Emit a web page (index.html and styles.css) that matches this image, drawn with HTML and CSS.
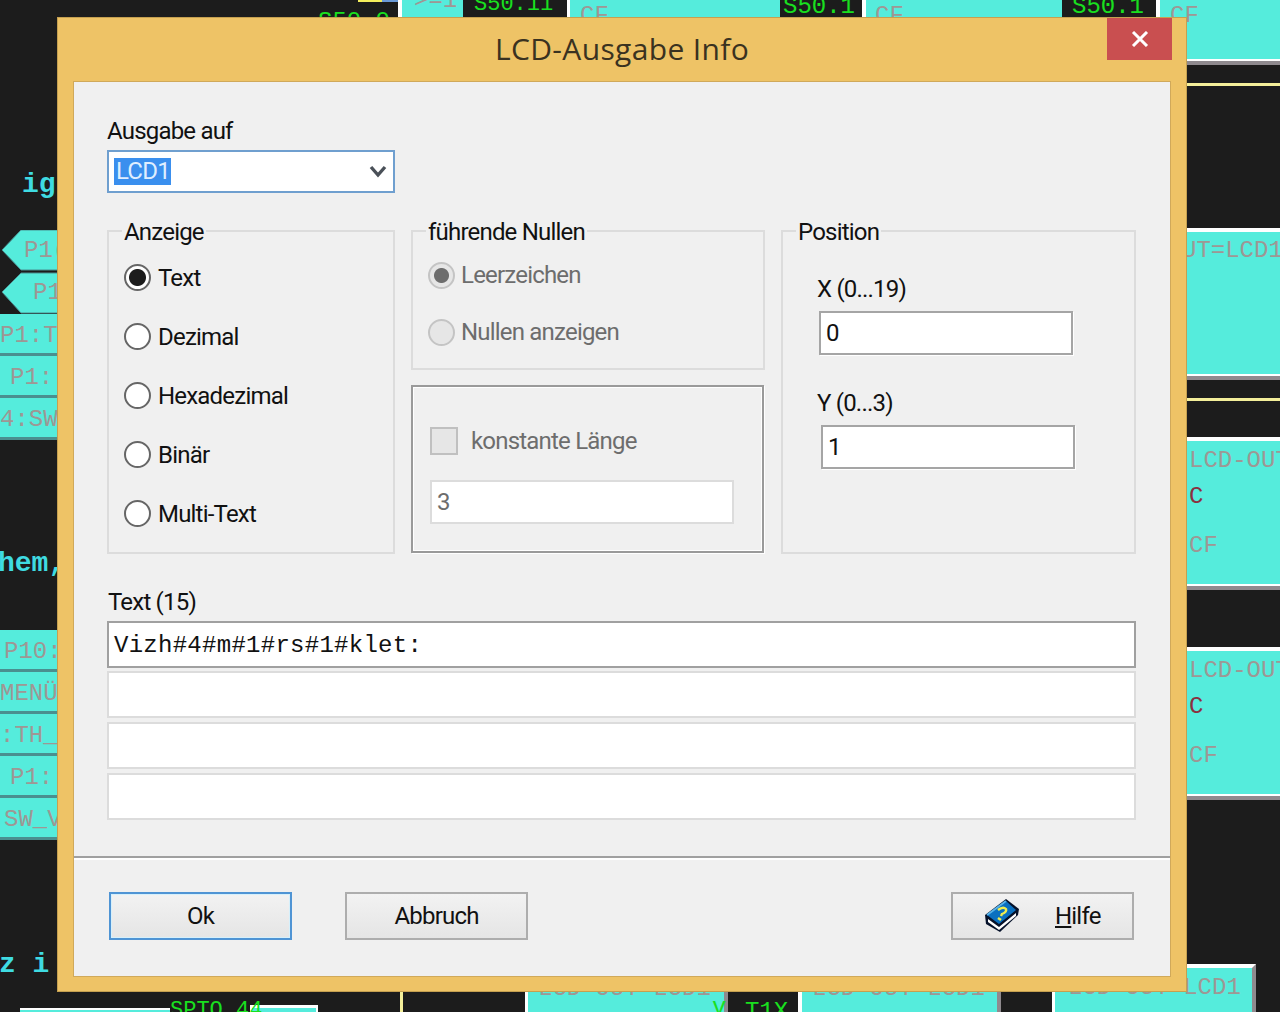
FILE: index.html
```html
<!DOCTYPE html>
<html lang="de">
<head>
<meta charset="utf-8">
<title>LCD-Ausgabe Info</title>
<link rel="stylesheet" href="styles.css">
</head>
<body>
<div class="desk">
  <div class="bk bar-yellow-top"></div>
  <div class="gr t-s0">S50.0</div>
  <div class="bk cy top1"><span class="gt tx-ge">&gt;=1</span></div>
  <div class="gr t-s1">S50.11</div>
  <div class="bk cy top2"><span class="gt tx-cf">CF</span></div>
  <div class="gr t-s2">S50.1</div>
  <div class="bk cy top3"><span class="gt tx-cf2">CF</span></div>
  <div class="gr t-s3">S50.1</div>
  <div class="bk cy top4"><span class="gt tx-cf3">CF</span></div>
  <div class="bk yline y1"></div>
  <div class="bk cy r1"><span class="gt tx-r1">UT=LCD1</span></div>
  <div class="bk yline y2"></div>
  <div class="bk cy r2"><span class="gt tx-l1">LCD-OUT</span><span class="rd tx-c">C</span><span class="gt tx-cf4">CF</span></div>
  <div class="bk cy r3"><span class="gt tx-l1">LCD-OUT</span><span class="rd tx-c">C</span><span class="gt tx-cf4">CF</span></div>

  <div class="cyt w-ig">ig</div>
  <div class="cyt w-hem">hem,</div>
  <div class="cyt w-zi">z i</div>

  <svg class="arrows" width="60" height="84" viewBox="0 0 60 84"><path d="M21 0H60V40H21L2 20Z" fill="#55ecdc" stroke="#4a8f90"/><path d="M21 43H60V83H21L2 62Z" fill="#55ecdc" stroke="#4a8f90"/></svg>
  <div class="gt lab a1">P1(</div>
  <div class="gt lab a2">P1</div>
  <div class="bk cy lc c1"><span class="gt">P1:T</span></div>
  <div class="bk cy lc c2"><span class="gt pad">P1:</span></div>
  <div class="bk cy lc c3"><span class="gt">4:SW</span></div>
  <div class="bk cy lc c4"><span class="gt pad0">P10:</span></div>
  <div class="bk cy lc c5"><span class="gt">MENÜ</span></div>
  <div class="bk cy lc c6"><span class="gt">:TH_</span></div>
  <div class="bk cy lc c7"><span class="gt pad">P1:</span></div>
  <div class="bk cy lc c8"><span class="gt pad0">SW_V</span></div>

  <div class="bk cy b1"></div>
  <div class="bk wbox"></div>
  <div class="gr t-b1">SPTO 44</div>
  <div class="bk yv"></div>
  <div class="bk cy b2"><span class="gt tx-b">LCD-OUT=LCD1</span></div>
  <div class="gr t-bv">v</div>
  <div class="gr t-b2">T1X</div>
  <div class="bk cy b3"><span class="gt tx-b">LCD-OUT=LCD1</span></div>
  <div class="bk cy b4"><span class="gt tx-b">LCD-OUT=LCD1</span></div>

  <div class="dialog">
    <div class="titlebar">
      <div class="title">LCD-Ausgabe Info</div>
      <div class="close"><svg width="18" height="16" viewBox="0 0 18 16"><path d="M2 1L16 15M16 1L2 15" stroke="#fff" stroke-width="3"/></svg></div>
    </div>
    <div class="client">
      <div class="form">
        <div class="lbl">Ausgabe auf</div>
        <div class="select">
          <span class="sel-text">LCD1</span>
          <svg width="18" height="14" viewBox="0 0 18 14"><path d="M2 2L9 10L16 2" fill="none" stroke="#4a5058" stroke-width="3.4"/></svg>
        </div>
        <div class="groups">
          <div class="group g-anz">
            <div class="legend">Anzeige</div>
            <div class="radios">
              <div class="opt"><span class="radio on"></span>Text</div>
              <div class="opt"><span class="radio"></span>Dezimal</div>
              <div class="opt"><span class="radio"></span>Hexadezimal</div>
              <div class="opt"><span class="radio"></span>Binär</div>
              <div class="opt"><span class="radio"></span>Multi-Text</div>
            </div>
          </div>
          <div class="midcol">
            <div class="group g-null">
              <div class="legend">führende Nullen</div>
              <div class="radios2">
                <div class="opt dis"><span class="radio on"></span>Leerzeichen</div>
                <div class="opt dis"><span class="radio"></span>Nullen anzeigen</div>
              </div>
            </div>
            <div class="box">
              <div class="opt dis chk"><span class="check"></span>konstante Länge</div>
              <div class="input dis-in">3</div>
            </div>
          </div>
          <div class="group g-pos">
            <div class="legend">Position</div>
            <div class="pos-x">
              <div class="lbl">X (0...19)</div>
              <div class="input num">0</div>
            </div>
            <div class="pos-y">
              <div class="lbl">Y (0...3)</div>
              <div class="input num">1</div>
            </div>
          </div>
        </div>
        <div class="lbl txt-lbl">Text (15)</div>
        <div class="lines">
          <div class="line first">Vizh#4#m#1#rs#1#klet:</div>
          <div class="line"></div>
          <div class="line"></div>
          <div class="line"></div>
        </div>
      </div>
      <div class="sep"></div>
      <div class="buttons">
        <div class="btn def">Ok</div>
        <div class="btn abb">Abbruch</div>
        <div class="btn help">
          <svg width="36" height="34" viewBox="0 0 36 34"><path d="M22 0L35 10L34 16L16 33L2 25L1 16Z" fill="#06122a"/><path d="M4 20L15 28L32 14V17L15 31L4 23Z" fill="#fff"/><path d="M22 2L32 11L15 25L3 16Z" fill="#0a70c0"/><path d="M22 2L3 16" stroke="#58b4ea" stroke-width="2"/><path d="M14 11Q19 7 22 10Q23 13 18 15L17 17" fill="none" stroke="#f0ee50" stroke-width="2.4"/><path d="M14 19l3 2" stroke="#f0ee50" stroke-width="2.4"/></svg>
          <span class="help-t"><span class="ul">H</span>ilfe</span>
        </div>
      </div>
    </div>
  </div>
</div>
</body>
</html>
```
FILE: styles.css
```css
* { box-sizing: border-box; }
html, body { margin: 0; padding: 0; }
.desk { position: relative; width: 1280px; height: 1012px; overflow: hidden; background: #1c1c1c; font-family: Roboto, "Liberation Sans", Arial, sans-serif; }

/* background canvas */
.bk { position: absolute; }
.cy { background: #55ecdc; border-top: 4px solid #fff; border-bottom: 4px solid #8f8a8e; box-shadow: inset 0 -2px 0 #fff; }
.gt, .rd, .gr, .cyt { font-family: "Liberation Mono", monospace; font-size: 24px; line-height: 28px; white-space: nowrap; }
.gt { color: #9e9794; }
.rd { color: #8a3040; }
.gr { position: absolute; color: #19e01f; }
.cyt { position: absolute; color: #3fdbe2; font-weight: 700; font-size: 28px; }
.bar-yellow-top { left: 358px; top: 0; width: 40px; height: 2px; background: linear-gradient(90deg, #f4ee5c 60%, #6a9ad8 60%); box-shadow: none; }
.t-s0 { left: 318px; top: 8px; }
.t-s1 { left: 474px; top: -9px; font-size: 22px; }
.t-s2 { left: 783px; top: -7px; }
.t-s3 { left: 1072px; top: -7px; }
.top1 { left: 398px; top: -4px; width: 65px; height: 30px; border-top: 0; border-bottom: 0; border-left: 4px solid #fff; box-shadow: none; }
.top2 { left: 567px; top: -4px; width: 213px; height: 30px; border-top: 0; border-bottom: 0; border-left: 3px solid #fff; box-shadow: none; }
.top3 { left: 862px; top: -4px; width: 200px; height: 30px; border-top: 0; border-bottom: 0; border-left: 4px solid #fff; box-shadow: none; }
.top4 { left: 1156px; top: -4px; width: 130px; height: 69px; border-top: 0; border-left: 4px solid #fff; }
.gt, .rd { position: absolute; }
.tx-ge { left: 12px; top: -9px; }
.tx-cf { left: 10px; top: 6px; }
.tx-cf2 { left: 9px; top: 6px; }
.tx-cf3 { left: 10px; top: 6px; }
.yline { left: 1187px; width: 93px; height: 3px; background: #f3ee9a; }
.y1 { top: 83px; }
.y2 { top: 398px; }
.r1 { left: 1187px; top: 228px; width: 100px; height: 152px; }
.tx-r1 { left: -5px; top: 5px; }
.r2 { left: 1187px; top: 437px; width: 100px; height: 153px; }
.r3 { left: 1187px; top: 647px; width: 100px; height: 153px; }
.tx-l1 { left: 2px; top: 6px; }
.tx-c { left: 2px; top: 42px; }
.tx-cf4 { left: 2px; top: 91px; }
.w-ig { left: 22px; top: 171px; }
.w-hem { left: -2px; top: 550px; }
.w-zi { left: -1px; top: 951px; }
.arrows { position: absolute; left: 0; top: 230px; }
.lab { z-index: 1; }
.a1 { left: 24px; top: 237px; }
.a2 { left: 33px; top: 279px; }
.lc { left: -4px; width: 64px; height: 42px; border-top: 0; border-bottom: 3px solid #4a8f90; box-shadow: none; }
.lc .gt { left: 4px; top: 8px; }
.lc .pad { left: 14px; }
.lc .pad0 { left: 8px; }
.c1 { top: 314px; }
.c2 { top: 356px; }
.c3 { top: 398px; }
.c4 { top: 630px; }
.c5 { top: 672px; }
.c6 { top: 714px; }
.c7 { top: 756px; }
.c8 { top: 798px; }
.b1 { left: 20px; top: 1008px; width: 150px; height: 20px; border-top-width: 2px; border-bottom: 0; box-shadow: none; }
.wbox { left: 250px; top: 1005px; width: 68px; height: 20px; background: #55ecdc; border-top: 3px solid #fff; border-left: 2px solid #fff; border-right: 2px solid #fff; }
.t-b1 { left: 170px; top: 997px; font-size: 22px; }
.yv { left: 400px; top: 990px; width: 3px; height: 24px; background: #f3ee9a; }
.b2 { left: 525px; top: 976px; width: 203px; height: 50px; border-left: 3px solid #fff; border-bottom: 0; border-right: 4px solid #8f8a8e; box-shadow: none; }
.t-bv { left: 712px; top: 994px; }
.t-b2 { left: 745px; top: 998px; }
.b3 { left: 798px; top: 976px; width: 203px; height: 50px; border-left: 4px solid #fff; border-bottom: 0; border-right: 4px solid #8f8a8e; box-shadow: none; }
.b4 { left: 1052px; top: 964px; width: 204px; height: 60px; border-left: 3px solid #fff; border-bottom: 0; border-right: 4px solid #8f8a8e; box-shadow: none; }
.tx-b { left: 10px; top: -5px; }
.b4 .tx-b { left: 13px; top: 6px; }

/* dialog */
.dialog { position: absolute; left: 57px; top: 17px; width: 1130px; height: 975px; background: #eec366; border: 1px solid #c5a050; display: flex; flex-direction: column; padding: 0 15px 14px; z-index: 5; }
.titlebar { height: 63px; flex: none; display: flex; justify-content: center; position: relative; }
.title { font-family: "Open Sans", sans-serif; font-size: 30px; letter-spacing: 0.35px; line-height: 62px; color: #3a3220; }
.close { position: absolute; right: -1px; top: 0; width: 65px; height: 42px; background: #c94f50; display: flex; align-items: center; justify-content: center; }
.client { flex: 1; background: #f0f0f0; border: 1px solid #d0a95a; display: flex; flex-direction: column; color: #111; font-size: 24px; letter-spacing: -0.8px; }
.form { padding: 33px 34px 0 33px; height: 774px; flex: none; }
.lbl { line-height: 28px; padding-top: 2px; height: 30px; white-space: nowrap; }
.select { width: 288px; height: 43px; margin-top: 5px; background: #fff; border: 2px solid #6f9fcf; display: flex; align-items: center; justify-content: space-between; padding: 0 6px 0 5px; }
.sel-text { background: #3a8fee; color: #dfeeff; line-height: 27px; height: 27px; padding: 0 1px 0 2px; }
.groups { display: grid; grid-template-columns: 288px 354px 355px; column-gap: 16px; margin-top: 37px; }
.group { border: 2px solid #dcdcdc; height: 324px; }
.legend { display: table; background: #f0f0f0; line-height: 28px; height: 30px; padding: 2px 2px 0; margin: -16px 0 0 13px; white-space: nowrap; }
.radios { display: flex; flex-direction: column; padding: 2px 0 0 15px; }
.radios .opt { height: 59px; }
.opt { display: flex; align-items: center; white-space: nowrap; }
.radio { width: 27px; height: 27px; border-radius: 50%; background: #fff; border: 2px solid #666; margin-right: 7px; flex: none; }
.radio.on { background: radial-gradient(circle, #1c1c1c 0 8px, #fff 9px); }
.midcol { display: flex; flex-direction: column; gap: 15px; }
.g-null { height: 140px; }
.radios2 { padding: 14px 0 0 15px; display: flex; flex-direction: column; gap: 27px; }
.radios2 .opt { height: 30px; }
.dis { color: #6d6d6d; }
.dis .radio { background: #e6e6e6; border-color: #c4c4c4; margin-right: 6px; }
.dis .radio.on { background: radial-gradient(circle, #6d6d6d 0 7px, #e6e6e6 8px); }
.box { width: 353px; height: 168px; border: 2px solid #9a9a9a; box-shadow: 1px 1px 0 #fff, inset 0 0 0 1px #fff; padding: 40px 0 0 17px; }
.chk { height: 28px; }
.check { width: 28px; height: 28px; background: #e6e6e6; border: 2px solid #c0c0c0; margin-right: 13px; flex: none; }
.input { height: 44px; background: #fff; line-height: 40px; padding-left: 5px; }
.dis-in { width: 304px; margin-top: 25px; border: 2px solid #dcdcdc; color: #6d6d6d; }
.num { width: 254px; border: 2px solid #a5a5a5; box-shadow: 1px 1px 0 #fff; margin-top: 8px; }
.pos-x, .pos-y { margin-left: 34px; }
.pos-x { padding-top: 27px; }
.pos-y { padding-top: 32px; }
.pos-x .num { margin-left: 2px; }
.pos-y .num { margin-left: 4px; }
.txt-lbl { margin: 32px 0 0 1px; }
.lines { display: flex; flex-direction: column; gap: 4px; margin-top: 5px; }
.line { width: 1029px; height: 47px; background: #fff; border: 2px solid #dcdcdc; font-family: "Liberation Mono", monospace; font-size: 24px; letter-spacing: 0.27px; line-height: 41px; padding: 2px 0 0 5px; color: #111; }
.line.first { border-color: #a0a0a0; margin-bottom: -1px; }
.sep { height: 4px; border-top: 2px solid #a0a0a0; border-bottom: 2px solid #fff; }
.buttons { display: flex; padding: 32px 36px 0 35px; }
.btn { width: 183px; height: 48px; border: 2px solid #adadad; background: linear-gradient(#f2f2f2, #e5e5e5); display: flex; align-items: center; justify-content: center; white-space: nowrap; }
.def { border-color: #4f94d4; box-shadow: inset 0 0 0 1px #d6f0fb; }
.abb { margin-left: 53px; }
.help { margin-left: auto; justify-content: flex-start; padding-left: 31px; }
.help-t { margin-left: 35px; }
.ul { text-decoration: underline; }
```
